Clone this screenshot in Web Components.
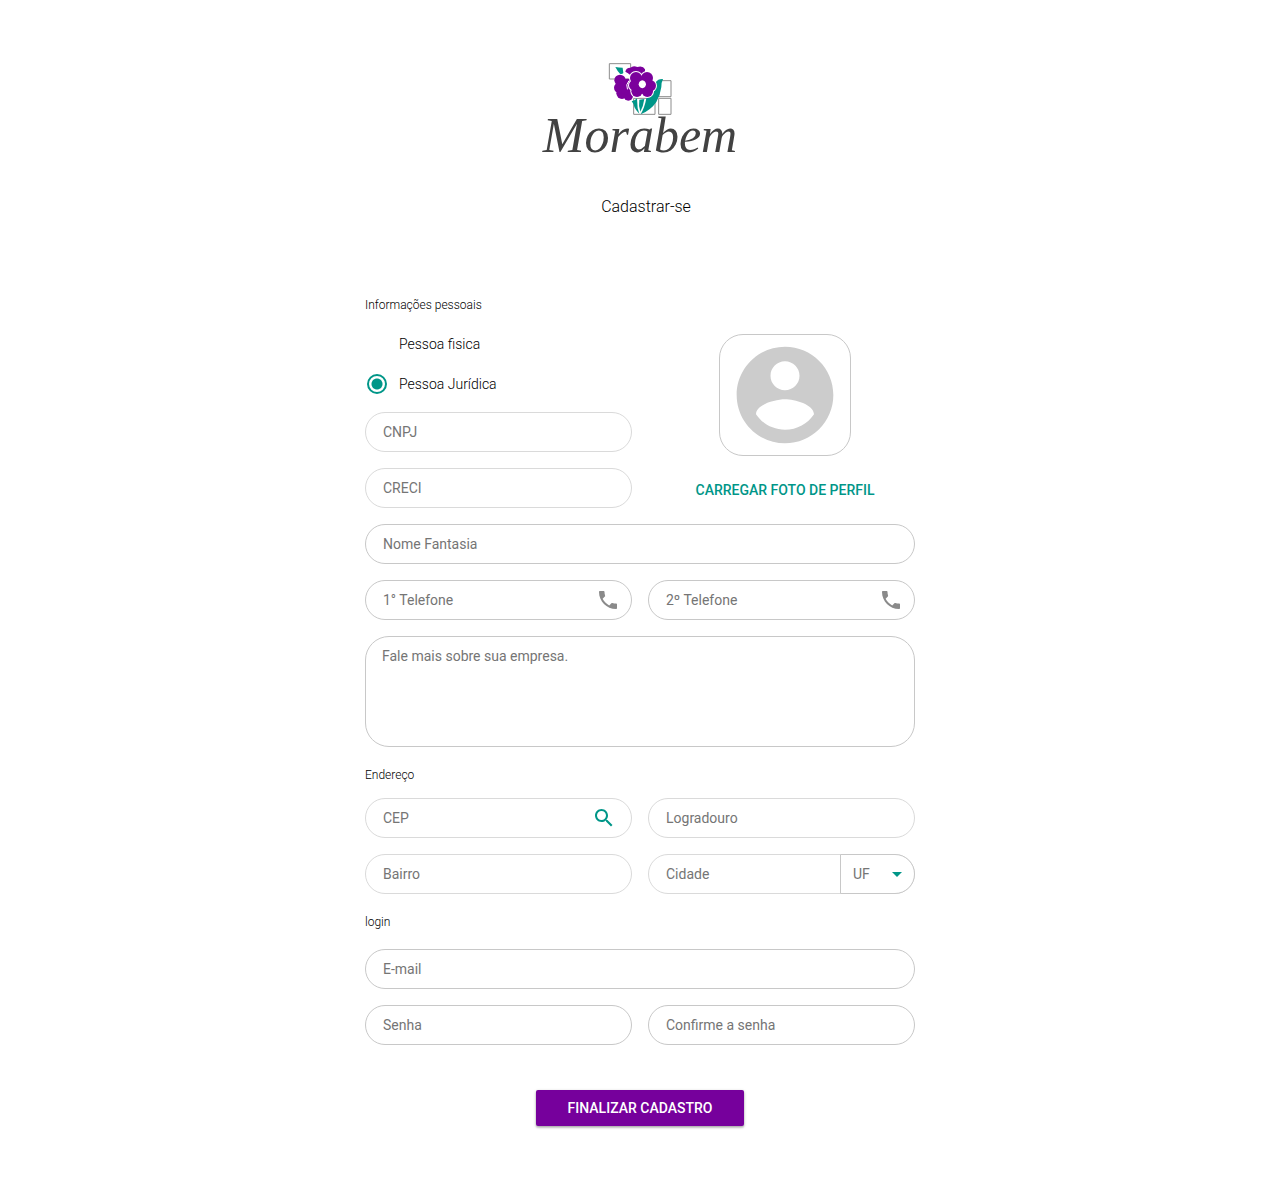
<!DOCTYPE html>
<html lang="pt-BR">
<head>
<meta charset="utf-8">
<meta name="viewport" content="width=device-width, initial-scale=1">
<title>Morabem - Cadastrar-se</title>
<style>
  :root {
    --teal: #009688;
    --purple: #76009c;
    --line: #c8c8c8;
    --line-soft: #dadada;
  }
  body { margin: 0; background: #fff; color: #000; font: 14px/20px Roboto, sans-serif; }
</style>
</head>
<body>
<signup-page></signup-page>

<script>
const define = (name, html, setup) => {
  const template = document.createElement('template');
  template.innerHTML = '<style>*{box-sizing:border-box}</style>' + html;
  customElements.define(name, class extends HTMLElement {
    constructor() {
      super();
      this.attachShadow({ mode: 'open' }).append(template.content.cloneNode(true));
    }
    connectedCallback() { if (setup) setup(this, this.shadowRoot); }
  });
};

/* Brand: flower over four tiles, with the name below */
define('brand-logo', `
  <style>
    :host { display: flex; flex-direction: column; align-items: center; }
    svg { display: block; width: 64px; height: 52px; }
    span { font: italic 50px/40px "Liberation Serif", serif; color: #424242; }
  </style>
  <svg viewBox="24 24 192 156" aria-hidden="true">
    <g fill="#fff" stroke="#8c8c8c" stroke-width="3">
      <path d="M28 26H92V72H28Z"/>
      <path d="M176 77H213V125H176Z"/>
      <path d="M176 130H213V178H176Z"/>
      <path d="M101 130H165V178H101Z"/>
    </g>
    <path fill="#009688" d="M46 36Q57 38 68 38L70 54Q66 58 60 56Q52 48 46 36Z"/>
    <path fill="#009688" d="M189 72Q184 82 184 96Q181 120 169 141Q152 166 122 178Q134 158 139 130L156 120Q168 98 167 82Q174 71 189 72Z"/>
    <path fill="#009688" d="M95 139Q104 138 111 130L113 160L118 176Q103 162 101 148Z"/>
    <path fill="#009688" d="M118 134L133 132Q130 154 121 170Q115 152 118 134Z"/>
    <g fill="#7b009c">
      <circle cx="60" cy="76" r="17"/><circle cx="58" cy="98" r="16"/>
      <circle cx="66" cy="115" r="17"/><circle cx="85" cy="123" r="14"/>
      <circle cx="82" cy="95" r="24"/>
      <path d="M76 50Q78 38 91 38Q100 30 112 36Q129 31 135 43Q137 55 126 62H92Q86 54 76 50Z"/>
    </g>
    <path fill="none" stroke="#fff" stroke-width="3" stroke-linecap="round" d="M73 54Q84 55 91 62M86 78Q76 89 82 102"/>
    <g fill="#fff">
      <circle cx="108" cy="69" r="21"/><circle cx="141" cy="69" r="21"/><circle cx="151" cy="92" r="20"/>
      <circle cx="142" cy="109" r="20"/><circle cx="111" cy="109" r="20"/><circle cx="103" cy="91" r="19"/>
    </g>
    <g fill="#7b009c">
      <circle cx="108" cy="69" r="18"/><circle cx="141" cy="69" r="18"/><circle cx="151" cy="92" r="17"/>
      <circle cx="142" cy="109" r="17"/><circle cx="111" cy="109" r="17"/><circle cx="103" cy="91" r="16"/>
      <circle cx="127" cy="90" r="26"/>
    </g>
    <path fill="#fff" d="M127 76Q137 78 138 88Q137 98 127 100Q117 98 116 88Q117 78 127 76Z"/>
  </svg>
  <span>Morabem</span>`);

/* Pill text box; an icon or a nested control goes in the slot */
define('pill-field', `
  <style>
    :host {
      display: flex; align-items: stretch; height: 40px; min-width: 0; box-sizing: border-box;
      border: 1px solid var(--line); border-radius: 20px; background: #fff;
    }
    :host([soft]) { border-color: var(--line-soft); }
    input {
      flex: 1; min-width: 0; border: 0; outline: 0; background: none; border-radius: 20px;
      padding: 0 17px; font: inherit; color: #424242;
    }
    input::placeholder { color: #757575; opacity: 1; }
  </style>
  <input><slot></slot>`, (host, root) => {
    const input = root.querySelector('input');
    const label = host.getAttribute('label');
    input.placeholder = label;
    input.setAttribute('aria-label', label);
    input.type = host.getAttribute('type') || 'text';
  });

define('field-icon', `
  <style>
    :host { display: flex; align-items: center; padding-right: 11px; color: #8a8a8a; }
    :host([name=search]) { padding-right: 15px; color: var(--teal); }
    svg { display: block; width: 24px; height: 24px; fill: currentColor; }
  </style>
  <svg viewBox="0 0 24 24" aria-hidden="true"><path/></svg>`, (host, root) => {
    const shapes = {
      phone: 'M6.62 10.79c1.44 2.83 3.76 5.14 6.59 6.59l2.2-2.2c.27-.27.67-.36 1.02-.24 1.12.37 2.33.57 3.57.57.55 0 1 .45 1 1V20c0 .55-.45 1-1 1-9.39 0-17-7.61-17-17 0-.55.45-1 1-1h3.5c.55 0 1 .45 1 1 0 1.25.2 2.45.57 3.57.11.35.03.74-.25 1.02l-2.2 2.2z',
      search: 'M15.5 14h-.79l-.28-.27C15.41 12.59 16 11.11 16 9.5 16 5.91 13.09 3 9.5 3S3 5.91 3 9.5 5.91 16 9.5 16c1.61 0 3.09-.59 4.23-1.57l.27.28v.79l5 4.99L20.49 19l-4.99-5zm-6 0C7.01 14 5 11.99 5 9.5S7.01 5 9.5 5 14 7.01 14 9.5 11.99 14 9.5 14z'
    };
    root.querySelector('path').setAttribute('d', shapes[host.getAttribute('name')]);
  });

define('state-select', `
  <style>
    :host { display: grid; width: 75px; margin: -1px -1px -1px 0; }
    select, svg { grid-area: 1 / 1; }
    select {
      appearance: none; width: 100%; height: 40px; padding: 0 12px; font: inherit; color: #757575;
      background: #fff; border: 1px solid var(--line); border-radius: 0 20px 20px 0; outline: 0;
    }
    svg { width: 24px; height: 24px; align-self: center; justify-self: end; margin-right: 6px; fill: var(--teal); pointer-events: none; }
  </style>
  <select aria-label="UF"><option>UF</option><option>MG</option><option>RJ</option><option>SP</option></select>
  <svg viewBox="0 0 24 24" aria-hidden="true"><path d="M7 10l5 5 5-5z"/></svg>`);

define('person-type', `
  <style>
    :host { display: block; }
    label { display: flex; align-items: center; gap: 12px; height: 40px; padding-left: 2px; font-weight: 300; }
    input { appearance: none; margin: 0; width: 20px; height: 20px; border-radius: 50%; }
    input:checked {
      border: 2px solid var(--teal);
      background: radial-gradient(circle, var(--teal) 0 5px, transparent 6px);
    }
  </style>
  <label><input type="radio" name="person">Pessoa fisica</label>
  <label><input type="radio" name="person" checked>Pessoa Jurídica</label>`);

define('profile-photo', `
  <style>
    :host { display: flex; flex-direction: column; align-items: center; gap: 16px; padding: 10px 0 0 7px; }
    .frame {
      display: grid; place-items: center; width: 132px; height: 122px;
      border: 1px solid var(--line); border-radius: 24px;
    }
    svg { display: block; width: 116px; height: 116px; fill: #ccc; }
    button {
      height: 36px; padding: 0 8px; border: 0; background: none; color: var(--teal);
      font: 500 14px/20px Roboto, sans-serif; text-transform: uppercase; white-space: nowrap;
    }
  </style>
  <div class="frame">
    <svg viewBox="0 0 24 24" aria-hidden="true"><path d="M12 2C6.48 2 2 6.48 2 12s4.48 10 10 10 10-4.48 10-10S17.52 2 12 2zm0 3c1.66 0 3 1.34 3 3s-1.34 3-3 3-3-1.34-3-3 1.34-3 3-3zm0 14.2c-2.5 0-4.71-1.28-6-3.22.03-1.99 4-3.08 6-3.08 1.99 0 5.97 1.09 6 3.08-1.29 1.94-3.5 3.22-6 3.22z"/></svg>
  </div>
  <button type="button">Carregar foto de perfil</button>`);

define('about-box', `
  <style>
    :host { display: flex; }
    textarea {
      flex: 1; min-width: 0; height: 111px; padding: 9px 16px; resize: none; outline: 0;
      border: 1px solid var(--line); border-radius: 24px; font: inherit; color: #424242;
    }
    textarea::placeholder { color: #757575; opacity: 1; }
  </style>
  <textarea aria-label="Fale mais sobre sua empresa." placeholder="Fale mais sobre sua empresa."></textarea>`);

/* Titled part of the form */
define('form-section', `
  <style>
    :host { display: block; }
    h2 { margin: 0; font-size: 12px; line-height: 16px; font-weight: 300; }
    .body { display: flex; flex-direction: column; gap: 16px; margin-top: 15px; }
    :host([spaced]) .body { margin-top: 19px; }
  </style>
  <h2></h2>
  <div class="body"><slot></slot></div>`, (host, root) => {
    root.querySelector('h2').textContent = host.getAttribute('heading');
  });

define('field-row', `
  <style>
    :host { display: grid; grid-template-columns: repeat(2, minmax(0, 1fr)); gap: 16px; }
  </style>
  <slot></slot>`);

define('submit-button', `
  <style>
    :host { display: flex; justify-content: center; }
    button {
      height: 36px; padding: 0 32px; border: 0; border-radius: 2px; background: var(--purple); color: #fff;
      font: 500 14px/20px Roboto, sans-serif; text-transform: uppercase;
      box-shadow: 0 1px 3px rgba(0,0,0,.3), 0 2px 2px rgba(0,0,0,.12);
    }
  </style>
  <button type="submit"><slot></slot></button>`);

define('signup-page', `
  <style>
    :host { display: block; padding: 63px 16px 64px; }
    main { max-width: 550px; margin: 0 auto; }
    h1 { margin: 42px 0 0; padding-left: 12px; font-size: 16px; line-height: 20px; font-weight: 300; text-align: center; }
    form { margin-top: 80px; }
    .ids { display: flex; flex-direction: column; gap: 16px; }
    person-type { margin-bottom: -8px; }
    .top { margin-top: -4px; }
    .address { margin-top: 20px; }
    .login { margin-top: 20px; }
    submit-button { margin-top: 45px; }
  </style>
  <main>
    <brand-logo></brand-logo>
    <h1>Cadastrar-se</h1>
    <form>
      <form-section heading="Informações pessoais">
        <field-row class="top">
          <div class="ids">
            <person-type></person-type>
            <pill-field soft label="CNPJ"></pill-field>
            <pill-field soft label="CRECI"></pill-field>
          </div>
          <profile-photo></profile-photo>
        </field-row>
        <pill-field label="Nome Fantasia"></pill-field>
        <field-row>
          <pill-field label="1° Telefone" type="tel"><field-icon name="phone"></field-icon></pill-field>
          <pill-field label="2º Telefone" type="tel"><field-icon name="phone"></field-icon></pill-field>
        </field-row>
        <about-box></about-box>
      </form-section>
      <form-section class="address" heading="Endereço">
        <field-row>
          <pill-field soft label="CEP"><field-icon name="search"></field-icon></pill-field>
          <pill-field soft label="Logradouro"></pill-field>
          <pill-field soft label="Bairro"></pill-field>
          <pill-field soft label="Cidade"><state-select></state-select></pill-field>
        </field-row>
      </form-section>
      <form-section class="login" spaced heading="login">
        <pill-field label="E-mail" type="email"></pill-field>
        <field-row>
          <pill-field label="Senha" type="password"></pill-field>
          <pill-field label="Confirme a senha" type="password"></pill-field>
        </field-row>
      </form-section>
      <submit-button>Finalizar cadastro</submit-button>
    </form>
  </main>`);
</script>
</body>
</html>
